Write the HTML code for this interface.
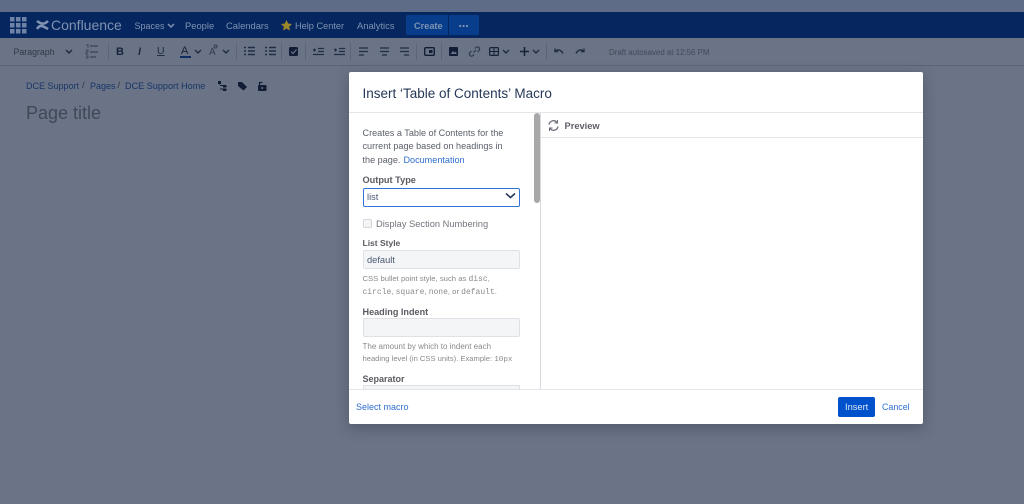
<!DOCTYPE html>
<html><head><meta charset="utf-8"><title>Insert Table of Contents Macro</title>
<style>
html,body{margin:0;padding:0}
body{width:1024px;height:504px;overflow:hidden;position:relative;background:#6b7486;font-family:"Liberation Sans",sans-serif;color:#1d2e4f}
.t{position:absolute;white-space:nowrap;line-height:14px}
.b{position:absolute}
svg{position:absolute;overflow:visible}
.n{color:#8093b2;font-size:9.4px;top:18.5px}
.c{color:#42526e;font-size:9.1px}
.l{color:#5a5a62;font-size:9.2px;font-weight:bold}
.h{color:#8a8a8f;font-size:7.7px}
.m{font-family:"Liberation Mono",monospace;font-size:8px}
.sep{position:absolute;top:43px;width:1px;height:17px;background:#5c6577}
.in{position:absolute;left:363px;width:155px;background:#f4f5f7;border:1px solid #dfe1e6;border-radius:2px;height:17px}
</style></head><body>
<div class="b" style="left:0;top:0;width:1024px;height:12px;background:#5e6c88"></div>
<div class="b" style="left:0;top:12px;width:1024px;height:26px;background:#05265e"></div>
<div class="b" style="left:0;top:65px;width:1024px;height:1px;background:#5c6577"></div>

<svg style="left:0;top:0" width="40" height="38"><g fill="#6f83a6">
<rect x="10" y="17" width="4.5" height="4.5"/><rect x="16" y="17" width="4.5" height="4.5"/><rect x="22" y="17" width="4.5" height="4.5"/>
<rect x="10" y="23" width="4.5" height="4.5"/><rect x="16" y="23" width="4.5" height="4.5"/><rect x="22" y="23" width="4.5" height="4.5"/>
<rect x="10" y="29" width="4.5" height="4.5"/><rect x="16" y="29" width="4.5" height="4.5"/><rect x="22" y="29" width="4.5" height="4.5"/>
</g></svg>
<svg style="left:36px;top:19px" width="13" height="13"><path d="M1 10C4 5 7 7 12 10M1 2C5 5 8 6 12 2" fill="none" stroke="#8093b2" stroke-width="2.600"/></svg>
<div class="t" style="left:51px;top:18px;font-size:14px;color:#8093b2">Confluence</div>
<div class="t n" style="left:134.500px;font-size:9px">Spaces</div>
<svg style="left:167px;top:23px" width="8" height="6"><path d="M1 1l3 3 3-3" fill="none" stroke="#8093b2" stroke-width="1.500"/></svg>
<div class="t n" style="left:185px">People</div>
<div class="t n" style="left:226px">Calendars</div>
<svg style="left:281px;top:20px" width="11" height="11"><path d="M5.500 0l1.700 3.500 3.800.5-2.800 2.600.7 3.900-3.400-1.900-3.400 1.900.7-3.900L0 4l3.800-.5z" fill="#9c862a"/></svg>
<div class="t n" style="left:295px;font-size:9.200px">Help Center</div>
<div class="t n" style="left:357px">Analytics</div>
<div class="b" style="left:406px;top:15px;width:73px;height:20px;background:#083d8c;border-radius:2px"></div>
<div class="b" style="left:448px;top:15px;width:1px;height:20px;background:#05265e"></div>
<div class="t" style="left:414px;top:19px;font-size:9.200px;font-weight:bold;color:#8093b2">Create</div>
<svg style="left:459px;top:23.500px" width="10" height="4"><g fill="#8093b2"><circle cx="1.200" cy="2" r="1.100"/><circle cx="4.600" cy="2" r="1.100"/><circle cx="8" cy="2" r="1.100"/></g></svg>

<div class="t" style="left:13.500px;top:45px;font-size:8.800px;color:#2f3747">Paragraph</div>
<svg style="left:65px;top:49px" width="8" height="6"><path d="M1 1l3 3 3-3" fill="none" stroke="#1d2740" stroke-width="1.400"/></svg>
<svg style="left:85px;top:44px" width="14" height="15" fill="none" stroke="#2f3747"><path d="M5 2h8M5 8h8M5 13h6"/><path d="M1 1h2v3M1 6h2v2H1v2h2M1 12h2v2H1" stroke-width=".7"/></svg>
<div class="sep" style="left:108px"></div>
<div class="t" style="left:116px;top:45px;font-size:11px;font-weight:bold;color:#162038">B</div>
<div class="t" style="left:138px;top:45px;font-size:11px;font-style:italic;font-weight:bold;color:#222c44">I</div>
<div class="t" style="left:157px;top:44px;font-size:10.500px;color:#222c44;text-decoration:underline">U</div>
<div class="t" style="left:181px;top:44px;font-size:11px;color:#162038">A</div>
<div class="b" style="left:180px;top:56px;width:11px;height:1.500px;background:#0f2c60"></div>
<svg style="left:194px;top:49px" width="8" height="6"><path d="M1 1l3 3 3-3" fill="none" stroke="#1d2740" stroke-width="1.300"/></svg>
<div class="t" style="left:209px;top:46px;font-size:10px;color:#343d52">A</div>
<svg style="left:213px;top:44px" width="5" height="5"><circle cx="2.500" cy="2.500" r="1.500" fill="none" stroke="#343d52"/></svg>
<svg style="left:222px;top:49px" width="8" height="6"><path d="M1 1l3 3 3-3" fill="none" stroke="#1d2740" stroke-width="1.300"/></svg>
<div class="sep" style="left:236px"></div>
<svg style="left:244px;top:46px" width="11" height="10" fill="none" stroke="#222c44" stroke-width="1.400"><path d="M4 1.500h7M4 5h7M4 8.500h7M0 1.500h2M0 5h2M0 8.500h2" /></svg>
<svg style="left:265px;top:46px" width="11" height="10" fill="none" stroke="#222c44" stroke-width="1.400"><path d="M4 1.500h7M4 5h7M4 8.500h7M0 1.500h2M0 5h2M0 8.500h2"/></svg>
<div class="sep" style="left:281px"></div>
<div class="b" style="left:289px;top:47px;width:9px;height:9px;background:#121c34;border-radius:1.500px"></div>
<svg style="left:289px;top:47px" width="9" height="9"><path d="M2 4.500l2 2 3.500-4" fill="none" stroke="#6b7486" stroke-width="1.200"/></svg>
<div class="sep" style="left:305px"></div>
<svg style="left:313px;top:47px" width="11" height="9" fill="none" stroke="#222c44" stroke-width="1.200"><path d="M5 1.500h6M5 4.500h6M0 7.500h11M0 3h3M1.500 1.500v3"/></svg>
<svg style="left:334px;top:47px" width="11" height="9" fill="none" stroke="#222c44" stroke-width="1.200"><path d="M5 1.500h6M5 4.500h6M0 7.500h11M0 3h3M1.500 1.500v3"/></svg>
<div class="sep" style="left:350px"></div>
<svg style="left:359px;top:47px" width="9" height="9" fill="none" stroke="#222c44" stroke-width="1.300"><path d="M0 1h9M0 4.500h9M0 8h5"/></svg>
<svg style="left:380px;top:47px" width="9" height="9" fill="none" stroke="#222c44" stroke-width="1.300"><path d="M0 1h9M0 4.500h9M2 8h5"/></svg>
<svg style="left:400px;top:47px" width="9" height="9" fill="none" stroke="#222c44" stroke-width="1.300"><path d="M0 1h9M0 4.500h9M4 8h5"/></svg>
<div class="sep" style="left:416px"></div>
<svg style="left:424px;top:47px" width="11" height="9"><rect x=".7" y=".7" width="9.600" height="7.600" rx="1" fill="none" stroke="#121c34" stroke-width="1.400"/><rect x="5" y="3" width="3.500" height="3" fill="#121c34"/></svg>
<div class="sep" style="left:441px"></div>
<div class="b" style="left:449px;top:47px;width:9px;height:9px;background:#121c34;border-radius:1px"></div>
<svg style="left:449px;top:47px" width="9" height="9"><path d="M1.500 7l2.500-3 1.500 1.500 1-1 1.500 2.500z" fill="#6b7486"/></svg>
<svg style="left:469px;top:46px" width="11" height="11" fill="none" stroke="#2c384f" stroke-width="1.200"><path d="M4.500 6.500l2.500-2.500M6 2.500l1-1a2 2 0 013 3l-1.500 1.500M5 8.500l-1 1a2 2 0 01-3-3l1.500-1.500"/></svg>
<svg style="left:489px;top:47px" width="10" height="9"><rect x=".6" y=".6" width="8.800" height="7.800" rx="1" fill="none" stroke="#162038" stroke-width="1.200"/><path d="M5 1v7M1 4.500h8" stroke="#162038"/></svg>
<svg style="left:502px;top:49px" width="8" height="6"><path d="M1 1l3 3 3-3" fill="none" stroke="#1d2740" stroke-width="1.300"/></svg>
<svg style="left:520px;top:47px" width="9" height="9"><path d="M4.500 0v9M0 4.500h9" stroke="#162038" stroke-width="1.500"/></svg>
<svg style="left:532px;top:49px" width="8" height="6"><path d="M1 1l3 3 3-3" fill="none" stroke="#1d2740" stroke-width="1.300"/></svg>
<div class="sep" style="left:546px"></div>
<svg style="left:554px;top:48px" width="10" height="7" fill="none" stroke="#222c44" stroke-width="1.400"><path d="M1 .5v3h3M1 3.500c2.500-2.500 6-2 8 2"/></svg>
<svg style="left:575px;top:48px" width="10" height="7" fill="none" stroke="#222c44" stroke-width="1.400"><path d="M9 .5v3H6M9 3.500c-2.500-2.500-6-2-8 2"/></svg>
<div class="t" style="left:609px;top:46px;font-size:7.900px;color:#414a5b">Draft autosaved at 12:56 PM</div>

<div class="t" style="left:26px;top:79px;font-size:9px;color:#173566">DCE Support</div>
<div class="t" style="left:82px;top:79px;font-size:9.600px;color:#2f3747">/</div>
<div class="t" style="left:90px;top:79px;font-size:9px;color:#173566">Pages</div>
<div class="t" style="left:117.500px;top:79px;font-size:9.600px;color:#2f3747">/</div>
<div class="t" style="left:125px;top:79px;font-size:9.100px;color:#173566">DCE Support Home</div>
<svg style="left:218px;top:81px" width="9" height="10" fill="#121c34"><rect x="0" y="0" width="3" height="3"/><rect x="5" y="4" width="3.500" height="2.500"/><rect x="5" y="7.500" width="3.500" height="2.500"/><path d="M1 3h1v5.500H5v-1H2V5h3V4H2z"/></svg>
<svg style="left:238px;top:82px" width="9" height="9"><path d="M0 0h4l5 5-3.500 3.500L0 4z" fill="#121c34"/></svg>
<svg style="left:258px;top:81px" width="9" height="10"><rect x="0" y="4" width="8.500" height="6" rx="1" fill="#121c34"/><path d="M1.500 4V1.500h3" fill="none" stroke="#121c34" stroke-width="1.200"/><circle cx="4.200" cy="7" r="1" fill="#6b7486"/></svg>
<div class="t" style="left:26px;top:103px;font-size:18px;line-height:20px;color:#3f4859">Page title</div>

<div class="b" style="left:349px;top:72px;width:574px;height:352px;background:#fff;border-radius:2px;box-shadow:0 4px 14px rgba(40,48,70,.4)"></div>
<div class="t" style="left:362.500px;top:86px;font-size:13.500px;line-height:16px;color:#253858">Insert ‘Table of Contents’ Macro</div>
<div class="b" style="left:349px;top:112px;width:574px;height:1px;background:#e3e5ea"></div>
<div class="b" style="left:349px;top:389px;width:574px;height:1px;background:#e3e5ea"></div>
<div class="b" style="left:540px;top:113px;width:1px;height:276px;background:#d8dae0"></div>
<div class="b" style="left:541px;top:137px;width:382px;height:1px;background:#e3e5ea"></div>
<div class="b" style="left:534px;top:113px;width:6px;height:90px;background:#a8a8a8;border-radius:3px"></div>

<svg style="left:548px;top:120px" width="11" height="11" fill="none" stroke="#6b6f78" stroke-width="1.300"><path d="M1 4.500A4.500 4.500 0 019 2.500M10 6.500A4.500 4.500 0 012 8.500"/><path d="M9.500 0v3h-3M1.500 11V8h3" stroke-width="1"/></svg>
<div class="t" style="left:564.500px;top:119px;font-size:9.300px;font-weight:bold;color:#5e6067">Preview</div>

<div class="t c" style="left:362.500px;top:126px;color:#5a5f69">Creates a Table of Contents for the</div>
<div class="t c" style="left:362.500px;top:139px;color:#5a5f69">current page based on headings in</div>
<div class="t c" style="left:362.500px;top:152.500px;color:#5a5f69">the page. <span style="color:#2f6fd0;margin-left:.5px">Documentation</span></div>

<div class="t l" style="left:362.500px;top:173px">Output Type</div>
<div class="b" style="left:363px;top:188px;width:155px;height:17px;background:#fff;border:1px solid #2f72d8;border-radius:2px"></div>
<div class="t" style="left:367px;top:190px;font-size:9.300px;color:#4b5873">list</div>
<svg style="left:505px;top:192px" width="11" height="8"><path d="M1 1.500l4.500 4 4.500-4" fill="none" stroke="#2a3b5e" stroke-width="1.600"/></svg>

<div class="b" style="left:363px;top:219px;width:7px;height:7px;background:#f4f5f7;border:1px solid #d4d6dc;border-radius:2px"></div>
<div class="t c" style="left:376px;top:216.500px;font-size:9.300px;color:#73757c">Display Section Numbering</div>

<div class="t l" style="left:362.500px;top:236px;font-size:8.500px">List Style</div>
<div class="in" style="top:250px"></div>
<div class="t" style="left:367px;top:253px;font-size:9.300px;color:#4b5873">default</div>
<div class="t h" style="left:362.500px;top:272px">CSS bullet point style, such as <span class="m">disc</span>,</div>
<div class="t h" style="left:362.500px;top:284.500px"><span class="m">circle</span>, <span class="m">square</span>, <span class="m">none</span>, or <span class="m">default</span>.</div>

<div class="t l" style="left:362.500px;top:304.500px;font-size:9.100px">Heading Indent</div>
<div class="in" style="top:318px"></div>
<div class="t h" style="left:362.500px;top:340px;font-size:8px">The amount by which to indent each</div>
<div class="t h" style="left:362.500px;top:351.500px;font-size:7.600px">heading level (in CSS units). Example: <span class="m" style="font-size:7.600px">10px</span></div>

<div class="t l" style="left:362.500px;top:372px;font-size:9px">Separator</div>
<div class="b" style="left:363px;top:385px;width:157px;height:4px;background:#f4f5f7;border:1px solid #dfe1e6;border-bottom:0;box-sizing:border-box"></div>

<div class="t" style="left:356px;top:400px;font-size:9px;color:#2f6fd0">Select macro</div>
<div class="b" style="left:838px;top:397px;width:37px;height:20px;background:#0052cc;border-radius:2px"></div>
<div class="t" style="left:845px;top:400px;font-size:9.300px;color:#dfe8f8">Insert</div>
<div class="t" style="left:882px;top:400px;font-size:8.900px;color:#2f6fd0">Cancel</div>
</body></html>
